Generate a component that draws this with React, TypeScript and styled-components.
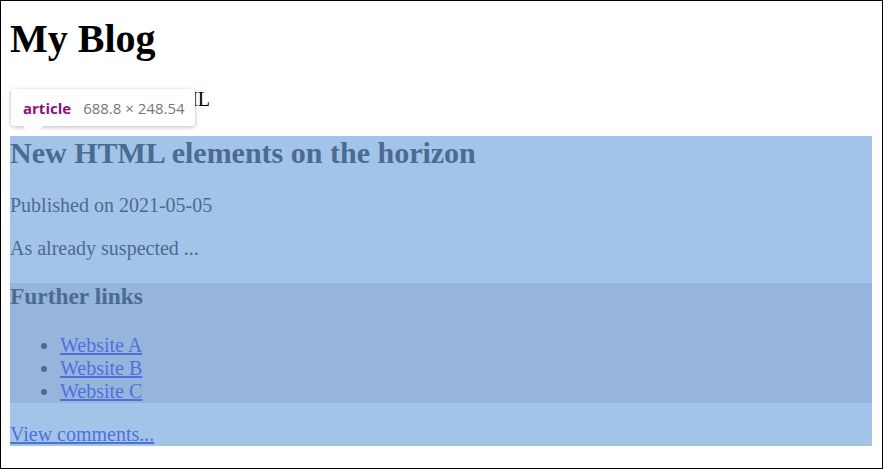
import React from "react";
import styled, { createGlobalStyle } from "styled-components";

const GlobalStyle = createGlobalStyle`
    html, body {
        margin: 0;
        padding: 0;
        background: #ffffff;
    }
    body {
        font-family: "Liberation Serif", "Times New Roman", serif;
        color: #000000;
    }
`;

const Frame = styled.div`
    position: relative;
    box-sizing: border-box;
    width: 883px;
    height: 469px;
    border: 1px solid #000000;
    padding: 0 10px 0 9px;
    overflow: hidden;
`;

const Title = styled.h1`
    font-size: 40px;
    line-height: 46px;
    font-weight: 700;
    margin: 14.5px 0 26.8px;
`;

const Text = styled.p`
    font-size: 20px;
    line-height: 23px;
    margin: 20px 0;
`;

const Article = styled.article`
    background: #a3c4e9;
    color: #4b6b90;
`;

const ArticleTitle = styled.h2`
    font-size: 30px;
    line-height: 33px;
    font-weight: 700;
    margin: 24.9px 0;
`;

const Links = styled.section`
    background: #95b5dc;
`;

const LinksTitle = styled.h3`
    font-size: 23.4px;
    line-height: 27px;
    font-weight: 700;
    margin: 23.4px 0;
`;

const LinkList = styled.ul`
    font-size: 20px;
    line-height: 23px;
    margin: 20px 0;
    padding-left: 50px;
`;

const Link = styled.a`
    color: #4f70dc;
    text-decoration: underline;
`;

const Tooltip = styled.div`
    position: absolute;
    left: 10px;
    top: 88px;
    height: 37px;
    display: flex;
    align-items: center;
    gap: 12px;
    padding: 0 10px 0 12px;
    background: #ffffff;
    border-radius: 3px;
    box-shadow: 0 1px 4px rgba(0, 0, 0, 0.28);
    font-family: "Open Sans", "Noto Sans", sans-serif;
    font-size: 15px;
    white-space: nowrap;

    &::after {
        content: "";
        position: absolute;
        left: 12px;
        top: 37px;
        border-left: 10px solid transparent;
        border-right: 10px solid transparent;
        border-top: 10px solid #ffffff;
    }
`;

const TagName = styled.span`
    color: #881280;
    font-weight: 700;
`;

const Size = styled.span`
    color: #777777;
`;

export default function App() {
    return (
        <>
            <GlobalStyle />
            <Frame>
                <Title>My Blog</Title>
                <Text>Everything about HTML</Text>
                <Article>
                    <ArticleTitle>New HTML elements on the horizon</ArticleTitle>
                    <Text>Published on 2021-05-05</Text>
                    <Text>As already suspected ...</Text>
                    <Links>
                        <LinksTitle>Further links</LinksTitle>
                        <LinkList>
                            <li><Link href="#">Website A</Link></li>
                            <li><Link href="#">Website B</Link></li>
                            <li><Link href="#">Website C</Link></li>
                        </LinkList>
                    </Links>
                    <Text>
                        <Link href="#">View comments...</Link>
                    </Text>
                </Article>
                <Tooltip>
                    <TagName>article</TagName>
                    <Size>688.8 × 248.54</Size>
                </Tooltip>
            </Frame>
        </>
    );
}
